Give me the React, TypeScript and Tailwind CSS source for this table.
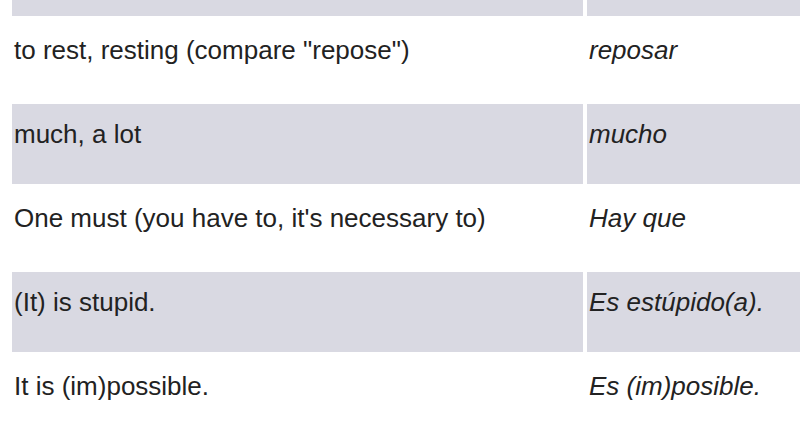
import React from "react";

const rows: { en: string; es: string; gray: boolean }[] = [
  { en: "to rest, resting (compare \"repose\")", es: "reposar", gray: false },
  { en: "much, a lot", es: "mucho", gray: true },
  { en: "One must (you have to, it's necessary to)", es: "Hay que", gray: false },
  { en: "(It) is stupid.", es: "Es estúpido(a).", gray: true },
  { en: "It is (im)possible.", es: "Es (im)posible.", gray: false },
];

export default function App() {
  return (
    <div
      className="w-[806px] h-[422px] overflow-hidden bg-white text-[#222222]"
      style={{ fontFamily: '"Liberation Sans", Arial, sans-serif' }}
    >
      <div className="grid grid-cols-[571px_213px] gap-[4px] pl-[12px]">
        <div className="h-[16px] bg-[#d9d9e2]" />
        <div className="h-[16px] bg-[#d9d9e2]" />
        {rows.map((r, i) => (
          <React.Fragment key={i}>
            <div
              className={`h-[80px] pl-[2px] pt-[15px] text-[26px] leading-[30px] ${
                r.gray ? "bg-[#d9d9e2]" : "bg-white"
              }`}
            >
              {r.en}
            </div>
            <div
              className={`h-[80px] pl-[2px] pt-[15px] text-[26px] leading-[30px] italic whitespace-nowrap ${
                r.gray ? "bg-[#d9d9e2]" : "bg-white"
              }`}
            >
              {r.es}
            </div>
          </React.Fragment>
        ))}
      </div>
    </div>
  );
}
